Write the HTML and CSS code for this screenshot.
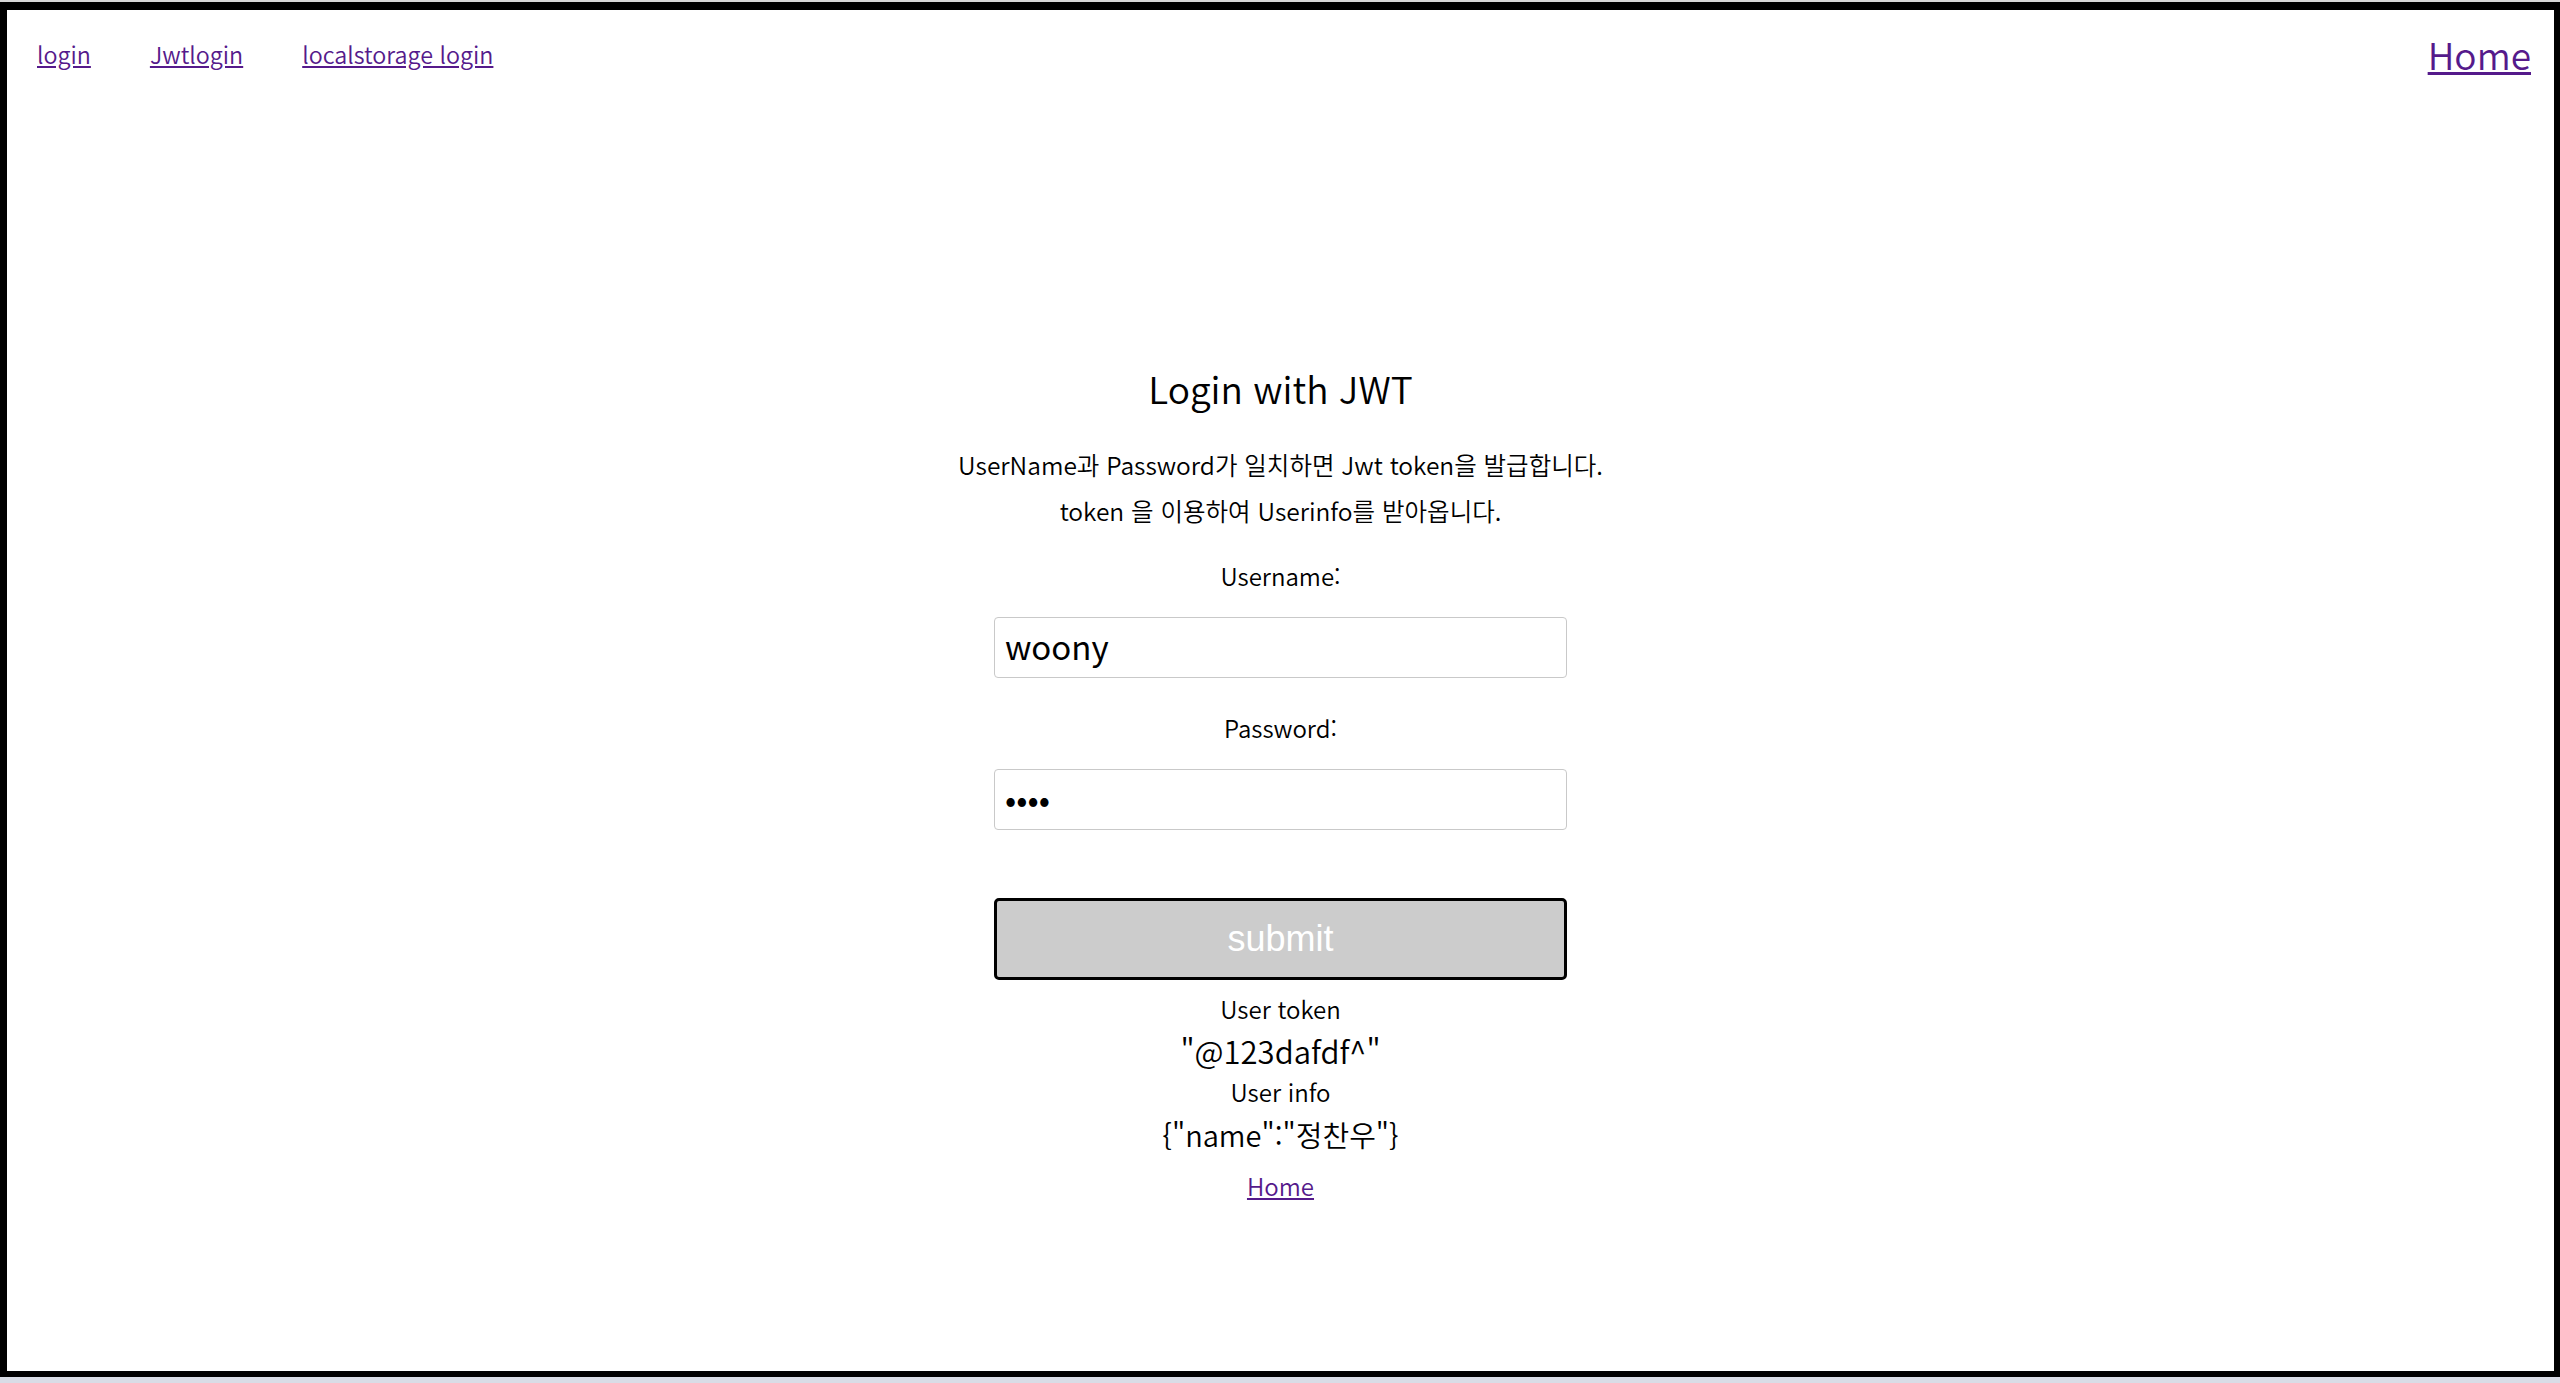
FILE: index.html
```html
<!DOCTYPE html>
<html lang="ko">
<head>
<meta charset="utf-8">
<title>Login with JWT</title>
<link rel="stylesheet" href="styles.css">
</head>
<body>
<div class="topstrip"></div>
<div class="frame">
  <nav class="nav">
    <div class="nav-links">
      <a href="#" class="link">login</a>
      <a href="#" class="link">Jwtlogin</a>
      <a href="#" class="link">localstorage login</a>
    </div>
    <a href="#" class="link home-big">Home</a>
  </nav>
  <main class="main">
    <h2 class="title">Login with JWT</h2>
    <div class="desc">
      <p class="desc-line">UserName과 Password가 일치하면 Jwt token을 발급합니다.</p>
      <p class="desc-line">token 을 이용하여 Userinfo를 받아옵니다.</p>
    </div>
    <form class="form" onsubmit="return false">
      <label class="label" for="username">Username:</label>
      <input class="field" id="username" type="text" value="woony">
      <label class="label label-pw" for="password">Password:</label>
      <input class="field" id="password" type="password" value="1234">
      <button class="submit" type="submit">submit</button>
    </form>
    <div class="result">
      <div class="result-label">User token</div>
      <div class="result-value">"@123dafdf^"</div>
      <div class="result-label">User info</div>
      <div class="result-value result-info">{"name":"정찬우"}</div>
      <a href="#" class="link home-small">Home</a>
    </div>
  </main>
</div>
</body>
</html>
```
FILE: styles.css
```css
html, body {
  margin: 0;
  padding: 0;
}
body {
  background: #d9dce6;
  font-family: "Noto Sans CJK KR", "Noto Sans", sans-serif;
  font-weight: 350;
  color: #000;
  height: 1383px;
  overflow: hidden;
}
.topstrip {
  height: 2px;
  background: #d8d8d8;
}
.frame {
  box-sizing: border-box;
  height: 1375px;
  background: #fff;
  border-style: solid;
  border-color: #000;
  border-width: 8px 6px 6px 7px;
  display: flex;
  flex-direction: column;
}
.nav {
  height: 88px;
  padding: 0 23px 0 30px;
  display: flex;
  align-items: center;
  justify-content: space-between;
}
.nav-links {
  display: flex;
  gap: 59px;
  font-size: 23.3px;
}
.link {
  color: #551a8b;
  text-decoration: underline;
}
.home-big {
  font-size: 37px;
  line-height: 50px;
}
.main {
  display: flex;
  flex-direction: column;
  align-items: center;
  padding-top: 266px;
}
.title {
  margin: 0;
  font-size: 37px;
  font-weight: 350;
  line-height: 48px;
}
.desc {
  margin-top: 30px;
  text-align: center;
}
.desc-line {
  margin: 0;
  font-size: 24.5px;
  line-height: 46px;
}
.form {
  display: flex;
  flex-direction: column;
  align-items: center;
  margin-top: 26px;
}
.label {
  font-size: 24px;
  line-height: 32px;
}
.label-pw {
  margin-top: 34px;
}
.field {
  box-sizing: border-box;
  margin-top: 25px;
  width: 573px;
  height: 61px;
  padding: 0 10px 3px;
  border: 1px solid #c9c9c9;
  border-radius: 4px;
  font-family: "Noto Sans CJK KR", "Noto Sans", sans-serif;
  font-weight: 400;
  font-size: 33px;
  color: #000;
  background: #fff;
  outline: none;
}
.submit {
  box-sizing: border-box;
  margin-top: 68px;
  width: 573px;
  height: 82px;
  border: 3px solid #000;
  border-radius: 5px;
  background: #cccccc;
  color: #fff;
  font-family: "Liberation Sans", Arial, sans-serif;
  font-size: 36px;
  padding: 0;
}
.result {
  display: flex;
  flex-direction: column;
  align-items: center;
  margin-top: 13px;
}
.result-label {
  font-size: 24px;
  line-height: 32px;
}
.result-value {
  font-size: 31px;
  line-height: 48px;
  margin: 2px 0 1px;
}
.result-info {
  font-size: 29px;
}
.home-small {
  margin-top: 11px;
  font-size: 24px;
  line-height: 32px;
}
```
